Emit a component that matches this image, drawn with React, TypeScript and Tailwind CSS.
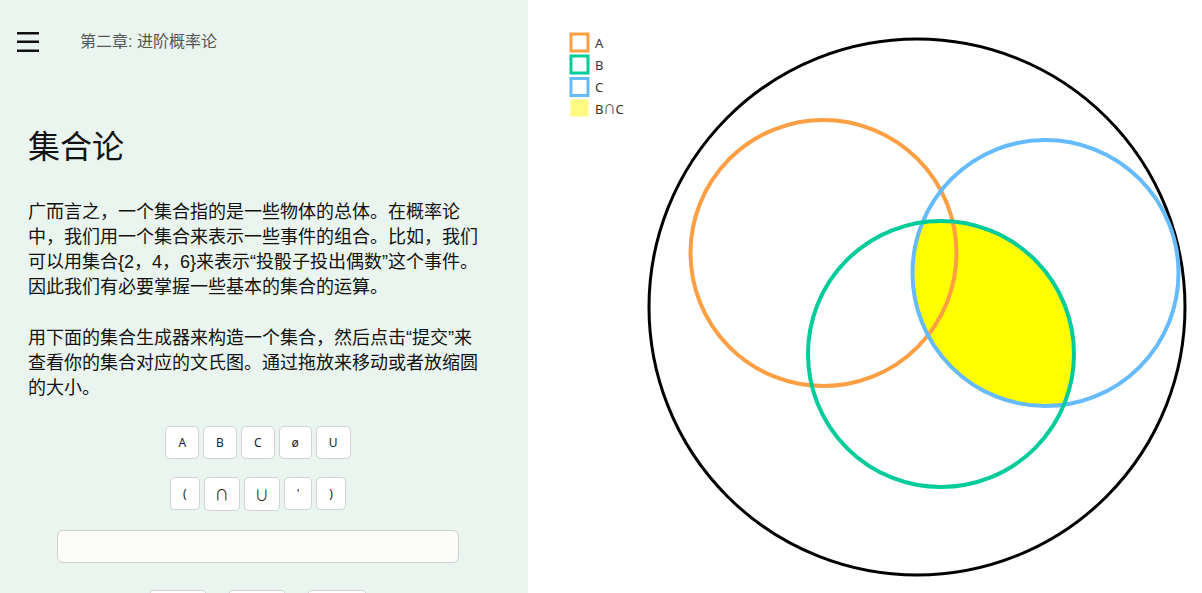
import React from "react";

const row1 = ["A", "B", "C", "ø", "U"];
const row2 = ["(", "∩", "∪", "'", ")"];

function KeyButton({ label }: { label: string }) {
  const isSetOp = label === "∩" || label === "∪";
  return (
    <button
      className={
        isSetOp
          ? "h-[34px] px-[10px] bg-white border border-[#d3d3d3] rounded-[5px] text-[14px] text-[#222] leading-none"
          : "h-[33px] px-3 bg-white border border-[#d3d3d3] rounded-[5px] text-[12px] text-[#222] leading-none"
      }
      style={isSetOp ? { fontFamily: "'Noto Sans CJK SC', sans-serif" } : undefined}
    >
      {label}
    </button>
  );
}

function Venn() {
  return (
    <svg width="674" height="593" viewBox="0 0 674 593" className="block">
      <defs>
        <clipPath id="clipC">
          <circle cx="517.5" cy="273" r="133" />
        </clipPath>
      </defs>
      {/* legend */}
      <rect x="43" y="34" width="17" height="17" fill="none" stroke="#ff9f43" strokeWidth="3" />
      <rect x="43" y="56" width="17" height="17" fill="none" stroke="#00cc9b" strokeWidth="3" />
      <rect x="43" y="78.5" width="17" height="17" fill="none" stroke="#66bbff" strokeWidth="3" />
      <rect x="42.5" y="99.5" width="18" height="17" fill="#fffa80" />
      <g fontFamily="'Noto Sans', sans-serif" fontSize="13" fill="#333">
        <text x="67" y="48">A</text>
        <text x="67" y="70">B</text>
        <text x="67" y="92">C</text>
        <text x="67" y="114">
          B<tspan fontFamily="'Noto Sans CJK SC', sans-serif" fontSize="12">∩</tspan>C
        </text>
      </g>
      {/* universe */}
      <circle cx="389" cy="307" r="268" fill="none" stroke="#000" strokeWidth="3" />
      {/* B ∩ C */}
      <circle cx="413" cy="354" r="133" fill="#ffff00" clipPath="url(#clipC)" />
      <circle cx="295.5" cy="253" r="133" fill="none" stroke="#ff9f43" strokeWidth="4" />
      <circle cx="517.5" cy="273" r="133" fill="none" stroke="#66bbff" strokeWidth="4" />
      <circle cx="413" cy="354" r="133" fill="none" stroke="#00cc9b" strokeWidth="4" />
    </svg>
  );
}

export default function App() {
  return (
    <div
      className="flex h-screen w-full overflow-hidden bg-white"
      style={{ fontFamily: "'Liberation Sans', 'Noto Sans CJK SC', sans-serif" }}
    >
      <div className="w-[528px] shrink-0 bg-[#e9f5ee] overflow-hidden">
        <div className="flex items-center h-[84px] pl-[17px]">
          <svg width="22" height="20" viewBox="0 0 22 20">
            <rect x="0" y="0" width="22" height="2.5" fill="#111" />
            <rect x="0" y="8.5" width="22" height="2.5" fill="#111" />
            <rect x="0" y="17.5" width="22" height="2.5" fill="#111" />
          </svg>
          <span className="ml-[41px] text-[16px] text-[#555]">第二章: 进阶概率论</span>
        </div>

        <div className="px-[28px]">
          <div className="w-[460px]">
            <h1 className="mt-[44px] text-[32px] leading-[38px] font-normal text-[#111]">集合论</h1>

            <p className="mt-[34px] text-[18px] leading-[25px] text-[#111]">
              广而言之，一个集合指的是一些物体的总体。在概率论中，我们用一个集合来表示一些事件的组合。比如，我们可以用集合{"{"}2，4，6{"}"}来表示“投骰子投出偶数”这个事件。因此我们有必要掌握一些基本的集合的运算。
            </p>
            <p className="mt-[26px] text-[18px] leading-[25px] text-[#111]">
              用下面的集合生成器来构造一个集合，然后点击“提交”来查看你的集合对应的文氏图。通过拖放来移动或者放缩圆的大小。
            </p>

            <div className="mt-[25px] flex flex-col items-center" style={{ fontFamily: "'Noto Sans', 'DejaVu Sans', sans-serif" }}>
              <div className="flex gap-1">
                {row1.map((k) => (
                  <KeyButton key={k} label={k} />
                ))}
              </div>
              <div className="mt-[18px] flex gap-1">
                {row2.map((k) => (
                  <KeyButton key={k} label={k} />
                ))}
              </div>
              <input
                className="mt-[19px] w-[402px] h-[33px] bg-[#fbfcfa] border border-[#d0d0d0] rounded-[6px] px-2 text-[14px] outline-none"
                type="text"
              />
              <div className="mt-[27px] flex gap-[21px]">
                <button className="h-[33px] px-[14px] bg-white border border-[#d3d3d3] rounded-[5px] text-[14px] text-[#222]">提交</button>
                <button className="h-[33px] px-[14px] bg-white border border-[#d3d3d3] rounded-[5px] text-[14px] text-[#222]">退格</button>
                <button className="h-[33px] px-[15px] bg-white border border-[#d3d3d3] rounded-[5px] text-[14px] text-[#222]">清空</button>
              </div>
            </div>
          </div>
        </div>
      </div>

      <div className="flex-1 bg-white">
        <Venn />
      </div>
    </div>
  );
}
